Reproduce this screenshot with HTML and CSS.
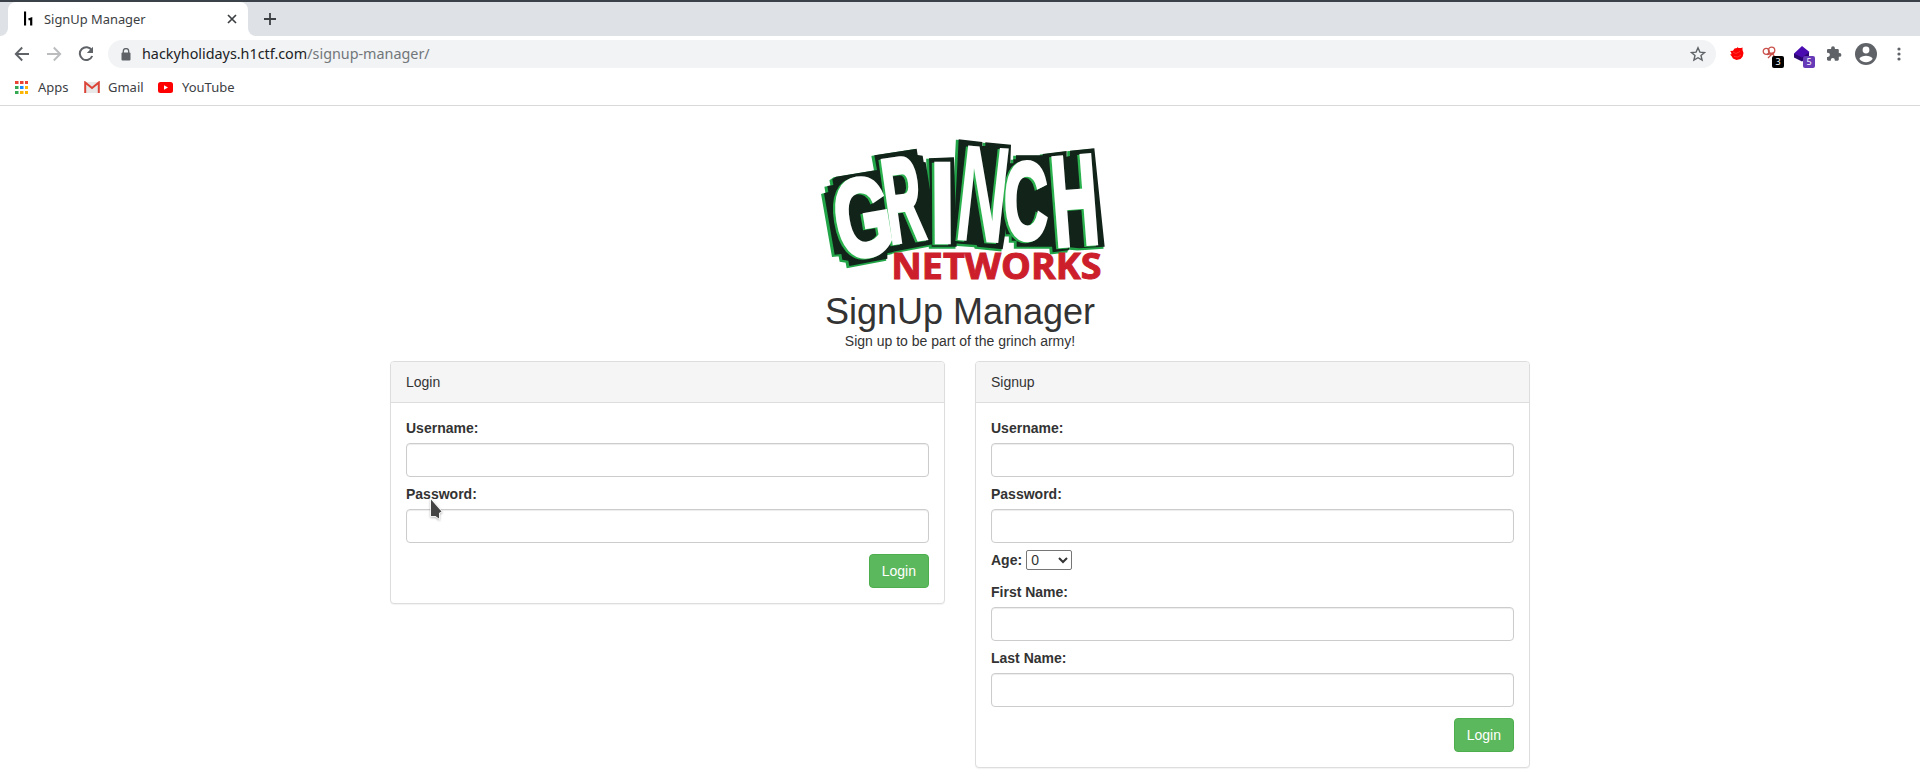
FILE: index.html
```html
<!DOCTYPE html>
<html lang="en">
<head>
<meta charset="utf-8">
<title>SignUp Manager</title>
<link rel="stylesheet" href="styles.css">
</head>
<body>
<header class="browser">
  <div class="tabs">
    <div class="tab-prev"></div>
    <div class="tab">
      <svg class="favicon" width="9" height="16" viewBox="0 0 9 16"><path d="M1 .5v14M7.2 14.500V7.500L4.500 8.500" fill="none" stroke="#000" stroke-width="2.200"/></svg>
      <span class="tab-title">SignUp Manager</span>
      <svg width="10" height="10" viewBox="0 0 10 10"><path d="M1 1l8 8M9 1l-8 8" stroke="#3c4043" stroke-width="1.700"/></svg>
    </div>
    <div class="tab-rest"><svg width="12" height="12" viewBox="0 0 12 12"><path d="M6 0v12M0 6h12" stroke="#3c4043" stroke-width="1.800"/></svg></div>
  </div>
  <div class="toolbar">
    <svg class="nav back" width="16" height="16" viewBox="0 0 16 16"><path d="M15 8H2M8.200 1.500L1.800 8l6.400 6.500" fill="none" stroke="#5f6368" stroke-width="1.900"/></svg>
    <svg class="nav" width="16" height="16" viewBox="0 0 16 16"><path d="M1 8h13M7.800 1.500L14.200 8l-6.400 6.500" fill="none" stroke="#babcbe" stroke-width="1.900"/></svg>
    <svg class="nav" width="16" height="16" viewBox="0 0 16 16"><path d="M13.700 4.300A6.400 6.400 0 1 0 14.200 10" fill="none" stroke="#5f6368" stroke-width="2"/><path d="M15 .8V7H8.800z" fill="#5f6368"/></svg>
    <div class="omnibox">
      <svg width="10" height="13" viewBox="0 0 10 13"><path d="M2.300 5V3.300a2.700 2.700 0 0 1 5.400 0V5" fill="none" stroke="#5f6368" stroke-width="1.300"/><rect x=".5" y="4.500" width="9" height="8" rx="1" fill="#5f6368"/></svg>
      <span class="url"><b>hackyholidays.h1ctf.com</b>/signup-manager/</span>
      <svg class="star" width="16" height="16" viewBox="0 0 16 16"><path d="M8 1.800l1.900 4.300 4.600.4-3.500 3 1.100 4.600L8 11.700l-4.100 2.400L5 9.500l-3.500-3 4.600-.4z" fill="none" stroke="#5f6368" stroke-width="1.400"/></svg>
    </div>
    <div class="exts">
      <svg class="red" width="14" height="13" viewBox="0 0 14 13"><path d="M1 5L0 4l3-.3L4.500 1.500 7 1l.5-1 1 1L11 1l1.500-.5L12.500 3 13.500 6l-.8 3.500L10.500 12l-4 1-3.500-1.500L1.500 9 0 7.500l1.500-.3z" fill="#f00"/><path d="M3 5l3 1.500 4-2M4 9.500l4 .5 3-2" fill="none" stroke="#fff" stroke-width=".4" opacity=".5"/></svg>
      <div class="ext pink"><svg width="16" height="16" viewBox="0 0 16 16"><g fill="none" stroke="#c9514b" stroke-width="1.300"><circle cx="4.200" cy="5.300" r="3"/><circle cx="9.600" cy="4.300" r="3.200"/><path d="M5 8.500l7-1.500M8 8c3-1 4 1 4.500 4M6 12l4-4"/></g></svg><span class="badge">3</span></div>
      <div class="ext purple"><svg width="18" height="16" viewBox="0 0 18 16"><path d="M1 7.500v4l8 4 7-5V6z" fill="#2c0672"/><path d="M9 0l7.500 6L9 11.500 1 7.500z" fill="#4a0cb0"/></svg><span class="badge">5</span></div>
      <svg class="puzzle" width="16" height="16" viewBox="0 0 16 16"><path d="M12.800 7V4.200c0-.7-.6-1.200-1.200-1.200H8.900v-.8a1.900 1.900 0 0 0-3.800 0V3H2.300C1.600 3 1 3.500 1 4.200v2.500h.8a2.100 2.100 0 0 1 0 4.200H1v2.700c0 .7.600 1.200 1.300 1.200h2.500V14a2 2 0 0 1 4 0v.8h2.800c.6 0 1.200-.5 1.200-1.200v-2.800h.7a1.900 1.900 0 0 0 0-3.800z" fill="#5f6368"/></svg>
      <svg class="avatar" width="22" height="22" viewBox="0 0 22 22"><circle cx="11" cy="11" r="11" fill="#5f6368"/><circle cx="11" cy="7" r="3.400" fill="#fff"/><path d="M4.300 15.800C5.800 13.600 8.200 12.800 11 12.800s5.200.8 6.700 3C16.200 18 13.800 19.200 11 19.200s-5.200-1.200-6.700-3.400z" fill="#fff"/></svg>
      <svg class="dots" width="4" height="14" viewBox="0 0 4 14"><g fill="#5f6368"><circle cx="2" cy="2" r="1.600"/><circle cx="2" cy="7" r="1.600"/><circle cx="2" cy="12" r="1.600"/></g></svg>
    </div>
  </div>
  <nav class="bookmarks">
    <svg width="13" height="13" viewBox="0 0 13 13"><path d="M0 0h3.500v3H0zM5 0h3.500v3H5zM10 0h3v3h-3z" fill="#ea4335"/><path d="M0 5h3.500v3H0zM0 10h3.500v3H0z" fill="#34a853"/><path d="M5 5h3.500v3H5z" fill="#1a8cff"/><path d="M10 5h3v3h-3zM5 10h3.500v3H5zM10 10h3v3h-3z" fill="#fbb505"/></svg>
    <span class="b-apps">Apps</span>
    <svg width="16" height="12" viewBox="0 0 16 12"><path d="M1 1h14v11H1z" fill="#e8e8e8"/><path d="M1.200 12V1.500L8 7l6.800-5.500V12" fill="none" stroke="#db4437" stroke-width="2"/></svg>
    <span class="b-gmail">Gmail</span>
    <svg width="15" height="11" viewBox="0 0 15 11"><rect width="15" height="11" rx="2.500" fill="#f00"/><path d="M6 3.200v4.600l4-2.300z" fill="#fff"/></svg>
    <span class="b-yt">YouTube</span>
  </nav>
</header>

<main class="container">
  <div class="heading">
    <svg class="logo" width="400" height="150" viewBox="-150 0 1200 450" role="img" aria-label="Grinch Networks">
      <defs>
        <g id="plates">
          <path d="M78 140L205 119 250 366 232 370V386L118 408 115 392 97 389 94 372 74 374 42 190 55 186 52 168 70 165 67 148z"/>
          <path d="M193 76L320 56 323 75 338 77 341 96 347 97 364 205 372 342 245 366z"/>
          <path d="M357 85L432 82 440 350 365 350z"/>
          <path d="M446 28L517 36V48H526V37L603 44 601 100 610 160 578 358 502 350 500 345 430 340z"/>
          <path d="M618 76H710L730 350H620V332H605V313H588V285L578 200 592 152 600 130V100H610V88H618z"/>
          <path d="M698 72L770 63V80L780 78V62L853 55 884 350 808 355 778 352 776 361 728 367z"/>
        </g>
        <g id="letters">
          <text transform="matrix(2.150 -.36 .55 3.280 94 389)">G</text>
          <text transform="matrix(1.550 -.23 .5 3.550 240 340)">R</text>
          <text transform="matrix(2.600 0 .02 3.400 362 335)">I</text>
          <text class="slim" transform="matrix(2.070 .15 -.46 4.120 429 329)">N</text>
          <text transform="matrix(1.820 0 .02 3.300 583 328)">C</text>
          <text transform="matrix(1.900 -.15 .29 3.800 736 348)">H</text>
        </g>
      </defs>
      <use href="#plates" class="plate-edge" x="-6" y="4"/>
      <use href="#plates" class="plate"/>
      <use href="#letters" class="letter-edge" x="-7" y="3"/>
      <use href="#letters" class="letter"/>
      <text class="networks" x="244" y="446" textLength="630" lengthAdjust="spacingAndGlyphs">NETWORKS</text>
    </svg>
    <h1>SignUp Manager</h1>
    <p>Sign up to be part of the grinch army!</p>
  </div>
  <div class="row">
    <section class="panel">
      <div class="panel-head">Login</div>
      <form class="panel-body">
        <label>Username:</label><input class="field" type="text">
        <label>Password:</label><input class="field" type="password">
        <button class="btn" type="button">Login</button>
      </form>
    </section>
    <section class="panel">
      <div class="panel-head">Signup</div>
      <form class="panel-body">
        <label>Username:</label><input class="field" type="text">
        <label>Password:</label><input class="field" type="password">
        <div class="age"><label>Age:</label><select><option>0</option><option>100</option></select></div>
        <label>First Name:</label><input class="field" type="text">
        <label>Last Name:</label><input class="field" type="text">
        <button class="btn" type="button">Login</button>
      </form>
    </section>
  </div>
</main>
<svg class="cursor" width="16" height="24" viewBox="0 0 16 24"><path d="M2 1.500L12.500 13.500 10 15V20.500L6.500 18H2z" fill="#444" stroke="#fff" stroke-width="1.500" paint-order="stroke"/></svg>
</body>
</html>
```
FILE: styles.css
```css
* { box-sizing: border-box; }
body { margin: 0; height: 784px; overflow: hidden; background: #fff; color: #333; font: 14px/20px "Liberation Sans", Arial, sans-serif; }
svg { display: block; flex: none; }

.browser { height: 106px; border-top: 2px solid #3b4148; border-bottom: 1px solid #d9d9db; font-family: "Noto Sans", sans-serif; color: #3c4043; }
.tabs { height: 34px; display: flex; background: linear-gradient(#dee1e6 0 16px, #fff 16px); }
.tab-prev { width: 8px; background: #dee1e6; border-bottom-right-radius: 8px; }
.tab { width: 240px; padding: 0 11px 0 16px; display: flex; align-items: center; background: #fff; border-radius: 8px 8px 0 0; }
.tab-title { flex: 1; margin-left: 11px; font-size: 12.900px; }
.tab-rest { flex: 1; background: #dee1e6; border-bottom-left-radius: 8px; padding: 11px 16px; }

.toolbar { height: 36px; display: flex; align-items: center; padding-left: 14px; }
.nav { margin-right: 16px; }
.omnibox { width: 1608px; height: 28px; margin-left: -2px; border-radius: 14px; background: #f1f3f4; display: flex; align-items: center; padding: 0 10px 0 13px; }
.url { flex: 1; margin-left: 11px; font-size: 14.350px; color: #72767a; }
.url b { font-weight: 400; color: #202124; }
.exts { display: flex; align-items: center; margin-left: 14px; }
.red { margin-top: -2px; }
.ext { position: relative; }
.pink { margin-left: 18px; }
.purple { margin-left: 15px; }
.badge { position: absolute; left: 10px; top: 10px; width: 12px; height: 12px; border-radius: 2px; background: #000; color: #fff; font-size: 9px; line-height: 12px; text-align: center; }
.purple .badge { background: #673ab7; }
.puzzle { margin-left: 15px; }
.avatar { margin-left: 13px; }
.dots { margin-left: 20px; }

.bookmarks { height: 32px; display: flex; align-items: center; padding: 0 0 2px 15px; font-size: 13px; }
.b-apps { width: 46px; margin-left: 10px; }
.b-gmail { width: 50px; margin-left: 8px; }
.b-yt { margin-left: 9px; }

.container { width: 1140px; margin: 0 auto; padding-top: 24px; }
.heading { display: flex; flex-direction: column; align-items: center; }
.logo { margin-bottom: 12px; overflow: visible; font-family: "Liberation Sans", Arial, sans-serif; font-size: 100px; font-weight: 700; }
.plate-edge { fill: #22a548; stroke: #22a548; stroke-width: 5; }
.plate { fill: #12241a; }
.letter-edge { fill: #2bb24e; stroke: #2bb24e; stroke-width: 4; }
.letter { fill: #fff; stroke: #fff; stroke-width: 4; }
.slim { stroke-width: 0; }
.networks { font-family: "Open Sans", sans-serif; font-weight: 700; font-size: 106px; fill: #cc1f2b; stroke: #cc1f2b; stroke-width: 3; }
h1 { margin: 0; font-size: 36px; line-height: 39px; font-weight: 400; }
p { margin: 0 0 10px; }
.row { display: flex; gap: 30px; align-items: flex-start; }
.panel { width: 555px; border: 1px solid #ddd; border-radius: 4px; box-shadow: 0 1px 1px rgba(0,0,0,.05); background: #fff; }
.panel-head { padding: 10px 15px; background: #f5f5f5; border-bottom: 1px solid #ddd; border-radius: 3px 3px 0 0; }
.panel-body { padding: 15px; display: flex; flex-direction: column; }
label { font-weight: 700; margin-bottom: 5px; }
.field { height: 34px; margin-bottom: 7px; border: 1px solid #ccc; border-radius: 4px; background: #fff; box-shadow: inset 0 1px 1px rgba(0,0,0,.075); }
.age { height: 25px; margin-bottom: 7px; display: flex; gap: 4px; align-items: flex-start; }
select { width: 46px; height: 20px; font: inherit; color: #333; background: #fff; border: 1px solid #767676; border-radius: 2px; padding: 0; }
.btn { align-self: flex-end; margin-top: 4px; height: 34px; padding: 6px 12px; border: 1px solid #4cae4c; border-radius: 4px; background: #5cb85c; color: #fff; font: inherit; }
.cursor { position: absolute; left: 429px; top: 498px; filter: drop-shadow(0 1px 1px rgba(0,0,0,.3)); }
```
